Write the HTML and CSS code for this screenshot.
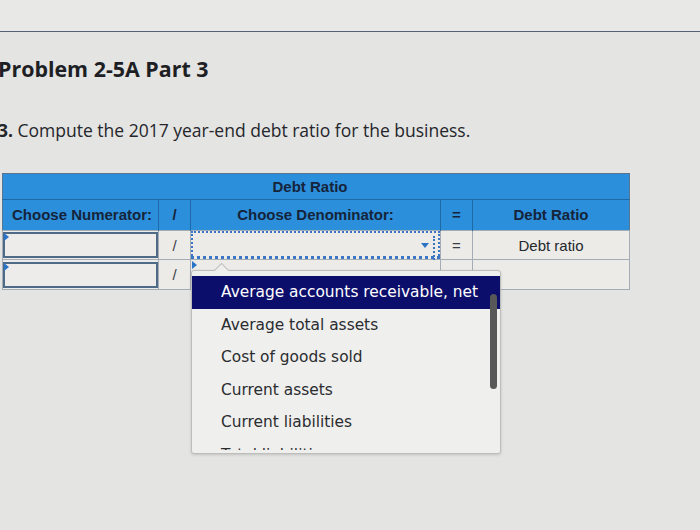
FILE: index.html
```html
<!DOCTYPE html>
<html lang="en">
<head>
  <meta charset="UTF-8">
  <title>Problem 2-5A Part 3</title>
  <link rel="stylesheet" href="styles.css">
</head>
<body>
  <div class="topbar"></div>
  <h1 class="title">Problem 2-5A Part 3</h1>
  <p class="question"><b>3.</b> Compute the 2017 year-end debt ratio for the business.</p>

  <div class="sheet">
    <table class="ratio">
      <colgroup>
        <col class="c-num">
        <col class="c-op">
        <col class="c-den">
        <col class="c-op">
        <col class="c-res">
      </colgroup>
      <tr class="caption">
        <th colspan="5">Debt Ratio</th>
      </tr>
      <tr class="heads">
        <th>Choose Numerator:</th>
        <th>/</th>
        <th>Choose Denominator:</th>
        <th>=</th>
        <th>Debt Ratio</th>
      </tr>
      <tr class="row">
        <td class="entry"><div class="box"><span class="flag"></span></div></td>
        <td class="op">/</td>
        <td class="pick focus"><div class="select"><span class="caret"></span></div></td>
        <td class="op">=</td>
        <td class="result">Debt ratio</td>
      </tr>
      <tr class="row">
        <td class="entry"><div class="box"><span class="flag"></span></div></td>
        <td class="op">/</td>
        <td class="pick"><span class="flag"></span></td>
        <td class="op">=</td>
        <td class="result"></td>
      </tr>
    </table>

    <div class="dropdown">
      <span class="notch"></span>
      <ul class="options">
        <li class="active">Average accounts receivable, net</li>
        <li>Average total assets</li>
        <li>Cost of goods sold</li>
        <li>Current assets</li>
        <li>Current liabilities</li>
        <li>Total liabilities</li>
      </ul>
      <span class="scroll"></span>
    </div>
  </div>
</body>
</html>
```

FILE: styles.css
```css
html {
  background: #e4e4e2;
}
body {
  margin: 0;
  min-height: 530px;
  background: #e4e4e2;
  color: #1c2430;
  font-family: "Liberation Sans", Arial, sans-serif;
}
.topbar {
  height: 31px;
  background: #e8e8e6;
  border-bottom: 1px solid #56627a;
}
.title {
  margin: 25px 0 0 -2px;
  font: 700 21.4px/24px "Open Sans", sans-serif;
  color: #1e1f24;
}
.question {
  margin: 39px 0 0 -2px;
  font: 17.5px/20px "Open Sans", sans-serif;
  color: #24262c;
}
.question b {
  font-weight: 700;
}
.sheet {
  position: relative;
  margin-top: 33px;
}
.ratio {
  margin-left: 2px;
  width: 627px;
  border-collapse: collapse;
  table-layout: fixed;
  border: 1px solid #5b7590;
}
.c-num { width: 156px; }
.c-op { width: 32px; }
.c-den { width: 250px; }
.c-res { width: 157px; }
.ratio th {
  background: #2c8fdb;
  color: #15243a;
  font-size: 15px;
  font-weight: 700;
  text-align: center;
  padding: 0;
}
.caption th {
  height: 25px;
  padding-right: 12px;
  border-bottom: 1px solid #1f6aa6;
}
.heads th {
  height: 28px;
  border-left: 1px solid #1f6aa6;
  padding-bottom: 2px;
}
.heads th:first-child {
  text-align: left;
  padding-left: 9px;
  border-left: none;
}
.row td {
  background: #ecebe8;
  border: 1px solid #a4adb5;
  padding: 0;
  text-align: center;
  font-size: 15px;
}
.row:nth-child(3) td { height: 27px; }
.row:nth-child(4) td { height: 29px; }
.op {
  color: #3a3f46;
}
.box {
  position: relative;
  height: 22px;
  margin: 1px 0;
  border: 2px solid #4e6a86;
  background: #edecea;
}
.flag {
  position: absolute;
  top: -1px;
  left: -1px;
  border-top: 4px solid transparent;
  border-bottom: 4px solid transparent;
  border-left: 5px solid #2a74c8;
}
.pick {
  position: relative;
}
.pick .flag {
  top: 1px;
  left: 1px;
}
.select {
  position: relative;
  height: 23px;
  border: 2px dotted #3b76c4;
  border-bottom-width: 3px;
}
.caret {
  position: absolute;
  right: 9px;
  top: 10px;
  border-left: 4px solid transparent;
  border-right: 4px solid transparent;
  border-top: 5px solid #2a74c8;
}
.caret::after {
  content: "";
  position: absolute;
  left: 8px;
  top: -12px;
  height: 24px;
  border-left: 2px dotted #3b76c4;
}
.result {
  color: #25282d;
}
.dropdown {
  position: absolute;
  left: 191px;
  top: 97px;
  width: 308px;
  height: 182px;
  background: #efefed;
  border: 1px solid #bdbdbb;
  border-radius: 3px;
  box-shadow: 0 1px 3px rgba(0,0,0,0.15);
}
.notch {
  position: absolute;
  left: 24px;
  top: -6px;
  width: 10px;
  height: 10px;
  background: #efefed;
  border-left: 1px solid #bdbdbb;
  border-top: 1px solid #bdbdbb;
  transform: rotate(45deg);
}
.options {
  list-style: none;
  margin: 0;
  padding: 5px 0 0;
  height: 174px;
  overflow: hidden;
  position: relative;
  font-family: "DejaVu Sans", Verdana, sans-serif;
  font-size: 15.4px;
  color: #2a2c30;
}
.options li {
  height: 32.5px;
  line-height: 32.5px;
  padding-left: 29px;
  white-space: nowrap;
}
.options .active {
  background: #0c0e6c;
  color: #fff;
}
.scroll {
  position: absolute;
  right: 3px;
  top: 23px;
  width: 7px;
  height: 95px;
  background: #585858;
  border-radius: 4px;
}
```
